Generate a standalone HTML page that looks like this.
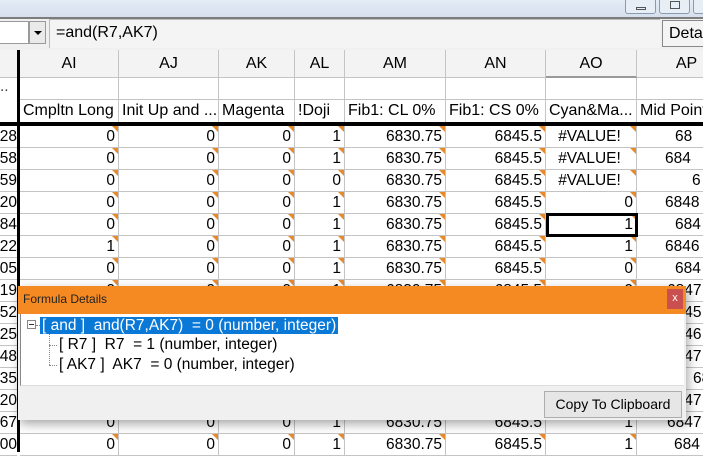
<!DOCTYPE html>
<html><head><style>
*{margin:0;padding:0;box-sizing:border-box}
body{width:703px;height:452px;overflow:hidden;position:relative;background:#fff;font-family:"Liberation Sans",Arial,sans-serif;font-size:15.5px;color:#000}
.a{position:absolute}
.cell{position:absolute;height:22px;border-right:1px solid #c4c4c4;border-bottom:1px solid #c4c4c4;text-align:right;padding-right:3px;line-height:22px;overflow:hidden;white-space:nowrap;background:#fff}
.tri{position:absolute;right:0;top:0;width:0;height:0;border-top:6px solid #e8892a;border-left:6px solid transparent}
.hd{position:absolute;top:50px;height:28px;line-height:28px;text-align:center;background:#f3f3f3;border-right:1px solid #c4c4c4;border-bottom:1px solid #c4c4c4;font-size:16px}
.nm{position:absolute;top:100px;height:22px;line-height:22px;padding-left:3px;border-right:1px solid #c4c4c4;overflow:hidden;white-space:nowrap;font-size:16px}
.bl{position:absolute;top:78px;height:22px;border-right:1px solid #c4c4c4;border-bottom:1px solid #c4c4c4}
.rh{position:absolute;left:0;width:17px;height:22px;line-height:22px;overflow:hidden;white-space:nowrap;direction:rtl;text-align:left;border-bottom:1px solid #c4c4c4;background:#fff}
</style></head><body>
<div class="a" style="left:0;top:0;width:703px;height:17px;background:linear-gradient(#e4ecf5,#d6e0ec)"></div>
<div class="a" style="left:625px;top:-2px;width:31px;height:16px;border:1px solid #8a9ab0;border-radius:3px;background:#e8eef6"><div class="a" style="left:10px;top:8px;width:10px;height:3px;border:1px solid #555"></div></div>
<div class="a" style="left:659px;top:-2px;width:31px;height:16px;border:1px solid #8a9ab0;border-radius:3px;background:#e8eef6"><div class="a" style="left:10px;top:2px;width:10px;height:8px;border:1px solid #555"></div></div>
<div class="a" style="left:693px;top:-2px;width:20px;height:16px;border:1px solid #8a9ab0;border-radius:3px;background:#e8eef6"></div>
<div class="a" style="left:0;top:17px;width:703px;height:2px;background:#7d7d7d"></div>
<div class="a" style="left:0;top:19px;width:703px;height:31px;background:#f0f0f0"></div>
<div class="a" style="left:0;top:21px;width:29px;height:23px;background:#fff;border:1px solid #9a9a9a;border-left:none"></div>
<div class="a" style="left:29px;top:21px;width:17px;height:23px;background:#eaeaea;border:1px solid #9a9a9a"><div class="a" style="left:4px;top:9px;border-top:4px solid #000;border-left:4px solid transparent;border-right:4px solid transparent"></div></div>
<div class="a" style="left:49px;top:19px;width:611px;height:29px;background:#f4f4f4;border-left:1px solid #bbb;border-top:1px solid #bbb;padding-left:6px;line-height:26px;font-size:16px">=and(R7,AK7)</div>
<div class="a" style="left:662px;top:20px;width:50px;height:27px;background:#f4f4f4;border:1px solid #888;padding-left:6px;line-height:25px;font-size:16px">Deta</div>
<div class="a" style="left:0;top:50px;width:17px;height:28px;background:#f3f3f3;border-bottom:1px solid #c4c4c4"></div>
<div class="a" style="left:0;top:78px;width:17px;height:22px;line-height:18px;color:#444">..</div>
<div class="a" style="left:17px;top:50px;width:3px;height:402px;background:#000"></div>
<div class="hd" style="left:20px;width:99px">AI</div>
<div class="hd" style="left:119px;width:100px">AJ</div>
<div class="hd" style="left:219px;width:76px">AK</div>
<div class="hd" style="left:295px;width:50px">AL</div>
<div class="hd" style="left:345px;width:101px">AM</div>
<div class="hd" style="left:446px;width:100px">AN</div>
<div class="hd" style="left:546px;width:91px;border-bottom:2px solid #999">AO</div>
<div class="hd" style="left:637px;width:100px">AP</div>
<div class="bl" style="left:20px;width:99px"></div><div class="bl" style="left:119px;width:100px"></div><div class="bl" style="left:219px;width:76px"></div><div class="bl" style="left:295px;width:50px"></div><div class="bl" style="left:345px;width:101px"></div><div class="bl" style="left:446px;width:100px"></div><div class="bl" style="left:546px;width:91px"></div><div class="bl" style="left:637px;width:100px"></div>
<div class="nm" style="left:20px;width:99px">Cmpltn Long</div>
<div class="nm" style="left:119px;width:100px">Init Up and ...</div>
<div class="nm" style="left:219px;width:76px">Magenta</div>
<div class="nm" style="left:295px;width:50px">!Doji</div>
<div class="nm" style="left:345px;width:101px">Fib1: CL 0%</div>
<div class="nm" style="left:446px;width:100px">Fib1: CS 0%</div>
<div class="nm" style="left:546px;width:91px">Cyan&amp;Ma...</div>
<div class="nm" style="left:637px;width:100px">Mid Point</div>
<div class="a" style="left:0;top:122px;width:703px;height:4px;background:#000"></div>
<div id="g"></div>
<script>
var rows=[["28",0,0,0,1,"#VALUE!","68",675],["58",0,0,0,1,"#VALUE!","684",665],["59",0,0,0,0,"#VALUE!","6",692],["20",0,0,0,1,"0","6848",665],["84",0,0,0,1,"1","684",675],["22",1,0,0,1,"1","6846",665],["05",0,0,0,1,"0","684",675],["19",0,0,0,1,"0","6847",667],["52",0,0,0,1,"0","6845",667],["25",0,0,0,1,"0","6846",667],["48",0,0,0,1,"0","6847",667],["35",0,0,0,1,"0","6847",693],["20",0,0,0,1,"0","6847",667],["67",0,0,0,1,"1","6847",667],["00",0,0,0,1,"1","684",674]];
var cols=[[20,99],[119,100],[219,76],[295,50],[345,101],[446,100],[546,91],[637,100]];
var h="";
rows.forEach(function(r,k){var t=126+22*k;
h+='<div class="rh" style="top:'+t+'px">'+r[0]+'</div>';
var v=[r[1],r[2],r[3],r[4],"6830.75","6845.5",r[5],r[6]];
v.forEach(function(x,i){var c=cols[i];var al=(x=="#VALUE!")?'text-align:center;':'';
var tr=i<7?'<div class="tri"></div>':'';
if(i==7)al='text-align:left;padding-left:'+(r[7]-637)+'px;';
h+='<div class="cell" style="'+al+'left:'+c[0]+'px;top:'+t+'px;width:'+c[1]+'px">'+x+tr+'</div>';});});
h+='<div class="a" style="left:546px;top:213px;width:92px;height:24px;border:3px solid #000"></div>';
document.getElementById("g").innerHTML=h;
</script>
<div class="a" style="left:18px;top:286px;width:668px;height:134px;background:#f0f0f0;box-shadow:2px 4px 10px rgba(0,0,0,.35)">
<div class="a" style="left:0;top:0;width:668px;height:28px;background:#f58a22;font-size:12px;line-height:27px;padding-left:5px;color:#222">Formula Details</div>
<div class="a" style="left:649px;top:3px;width:16px;height:20px;background:#c9504f;color:#fff;font-size:11px;text-align:center;line-height:18px">x</div>
<div class="a" style="left:2px;top:28px;width:664px;height:72px;background:#fff;border-bottom:1px solid #ddd;border-left:1px solid #888"></div>
<div class="a" style="left:9px;top:34px;width:9px;height:9px;border:1px solid #888;background:#fff"><div class="a" style="left:1px;top:3px;width:5px;height:1px;background:#333"></div></div>
<div class="a" style="left:18px;top:39px;width:4px;border-top:1px dotted #888"></div>
<div class="a" style="left:31px;top:45px;height:34px;border-left:1px dotted #888"></div>
<div class="a" style="left:31px;top:59px;width:8px;border-top:1px dotted #888"></div>
<div class="a" style="left:31px;top:79px;width:8px;border-top:1px dotted #888"></div>
<div class="a" style="left:22px;top:31px;height:17px;background:#0a78d7;color:#fff;line-height:17px;font-size:15.5px;padding:0 2px;white-space:nowrap">[ and ]&nbsp; and(R7,AK7)&nbsp; = 0 (number, integer)</div>
<div class="a" style="left:41px;top:50px;line-height:18px;font-size:15.5px;white-space:nowrap">[ R7 ]&nbsp; R7&nbsp; = 1 (number, integer)</div>
<div class="a" style="left:41px;top:70px;line-height:18px;font-size:15.5px;white-space:nowrap">[ AK7 ]&nbsp; AK7&nbsp; = 0 (number, integer)</div>
<div class="a" style="left:526px;top:105px;width:138px;height:27px;background:#e6e6e6;border:1px solid #adadad;text-align:center;line-height:25px;font-size:14px">Copy To Clipboard</div>
</div>
</body></html>
